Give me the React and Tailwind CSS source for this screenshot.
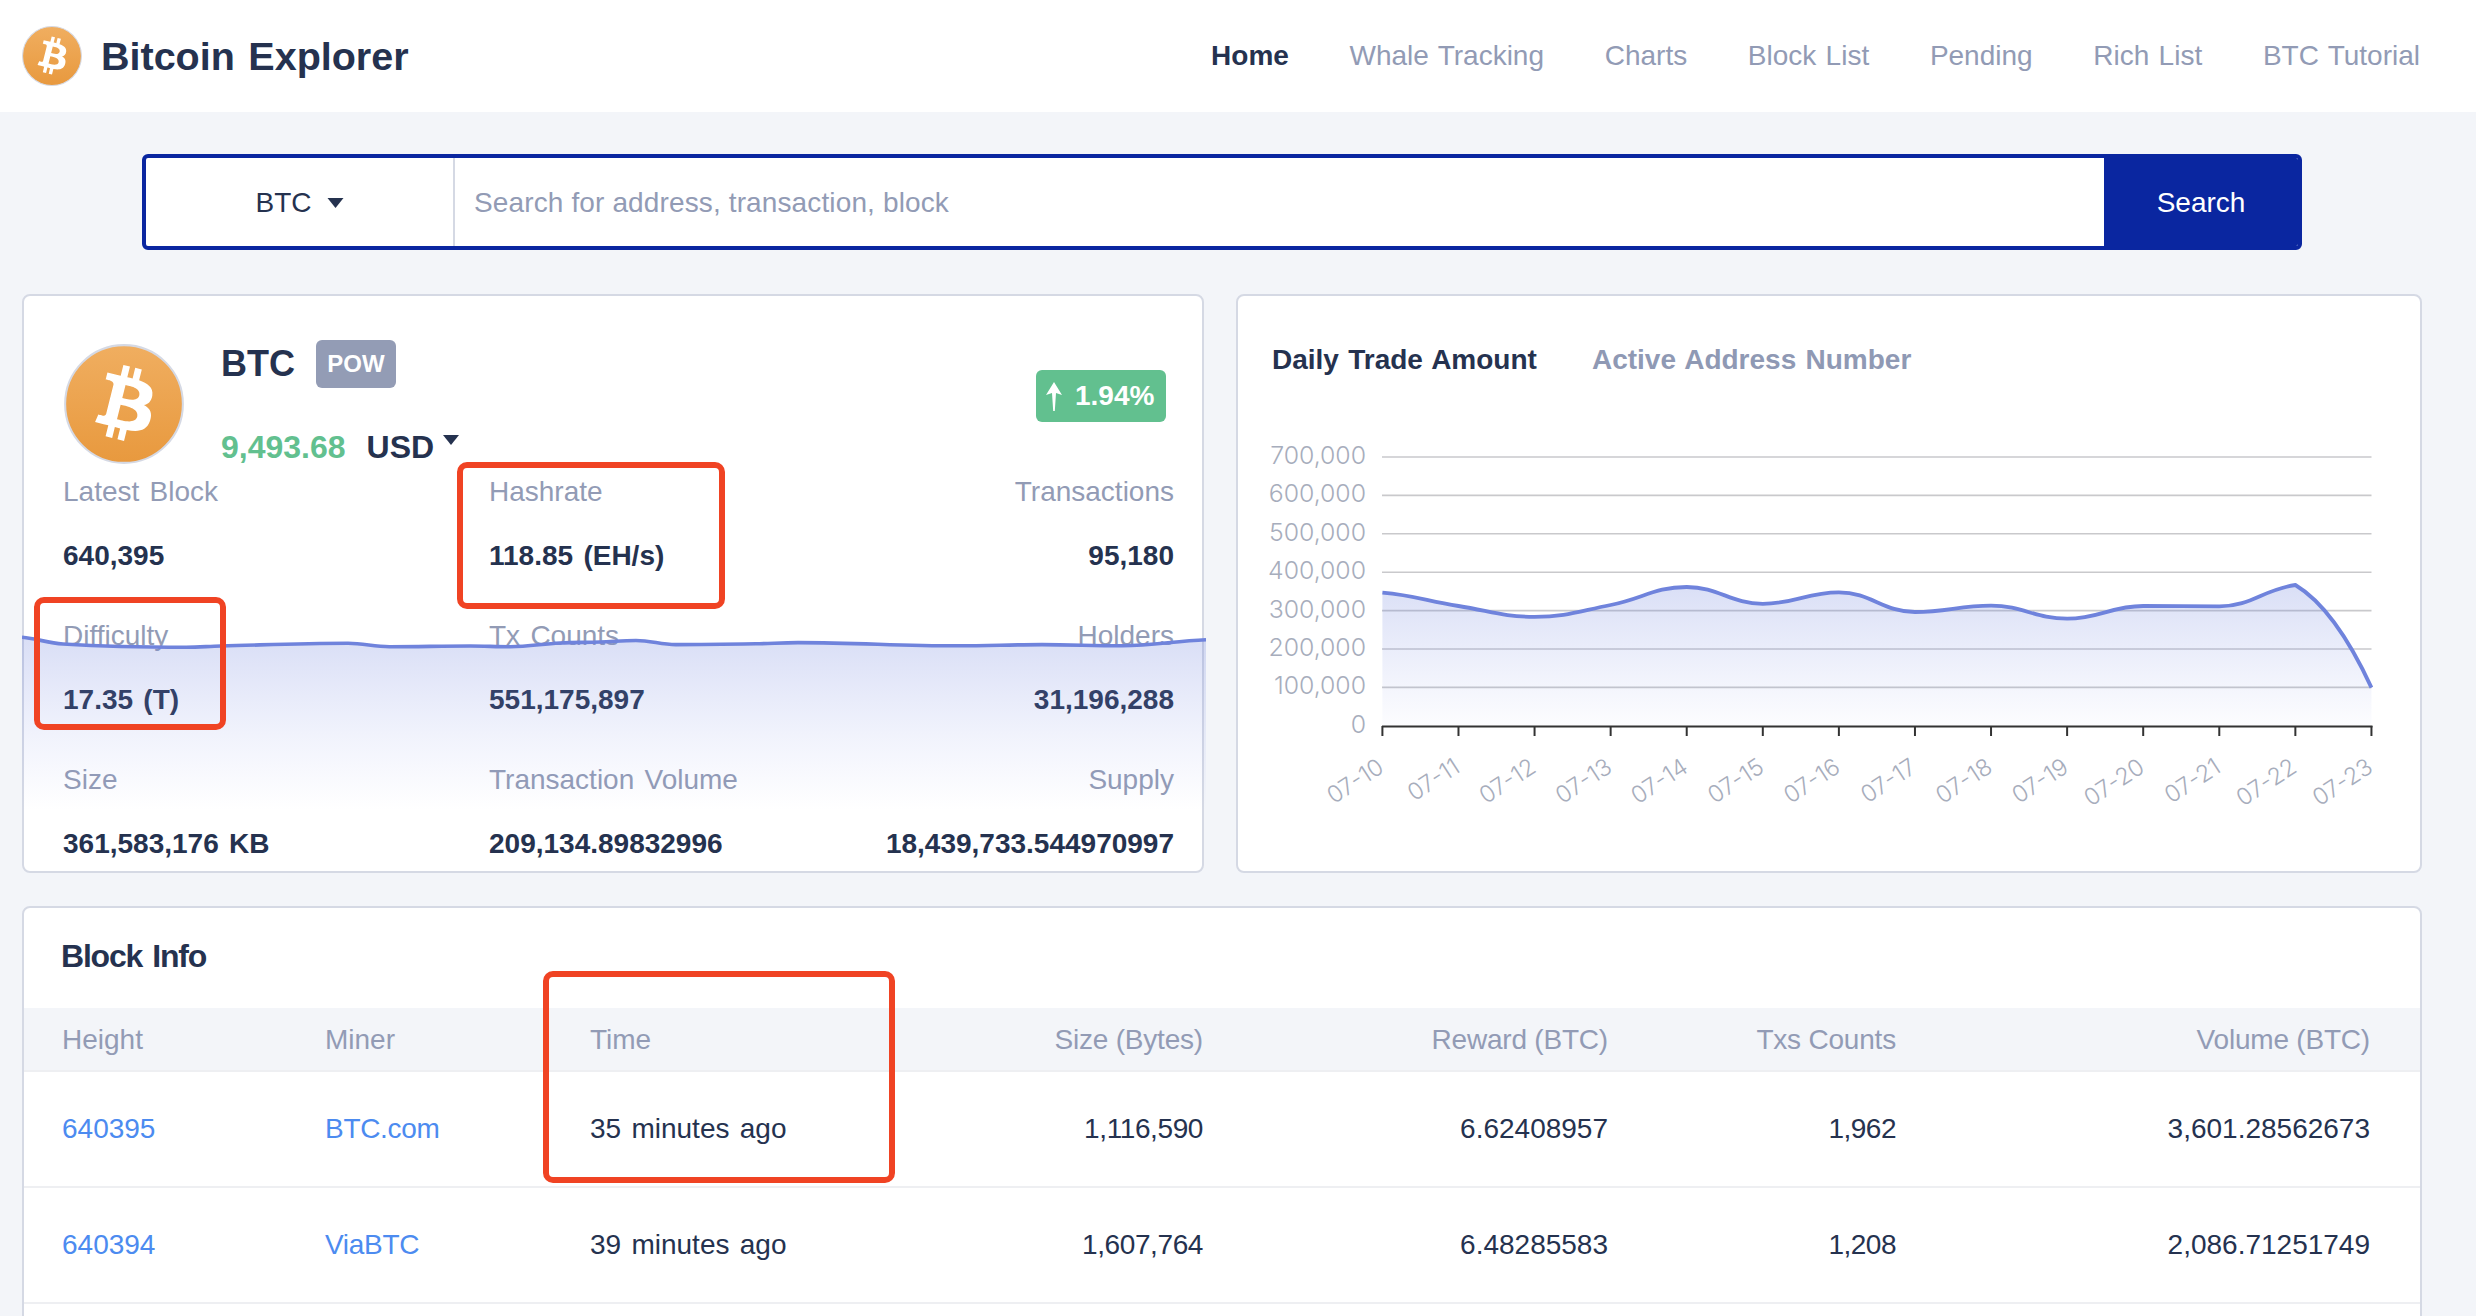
import React from 'react';

const BTC_PATH = "M46.1 27.441c.638-4.258-2.606-6.547-7.039-8.074l1.438-5.768-3.512-.875-1.4 5.616c-.922-.23-1.87-.447-2.812-.662l1.41-5.653-3.509-.875-1.439 5.766c-.764-.174-1.514-.346-2.242-.527l.004-.018-4.842-1.209-.934 3.75s2.605.597 2.55.634c1.422.355 1.68 1.296 1.636 2.042l-1.638 6.571c.098.025.225.061.365.117l-.37-.092-2.297 9.205c-.174.432-.615 1.08-1.609.834.035.051-2.552-.637-2.552-.637l-1.743 4.02 4.57 1.139c.85.213 1.683.436 2.502.646l-1.453 5.835 3.507.875 1.44-5.772c.957.26 1.887.5 2.797.726L27.504 50.8l3.511.875 1.453-5.823c5.987 1.133 10.49.676 12.383-4.738 1.527-4.36-.075-6.875-3.225-8.516 2.294-.531 4.022-2.04 4.483-5.157zM38.08 38.69c-1.086 4.36-8.426 2.004-10.807 1.412l1.928-7.729c2.38.594 10.011 1.77 8.88 6.317zm1.085-11.312c-.99 3.966-7.1 1.951-9.083 1.457l1.748-7.01c1.983.494 8.367 1.416 7.335 5.553z";

function Coin({ id, className }) {
  return (
    <svg viewBox="0 0 64 64" className={className}>
      <defs>
        <linearGradient id={id} x1="0" y1="0" x2="0" y2="1">
          <stop offset="0" stopColor="#f0ae60" />
          <stop offset="1" stopColor="#e8993e" />
        </linearGradient>
      </defs>
      <circle cx="32" cy="32" r="31.4" fill={`url(#${id})`} stroke="#d5d9e4" strokeWidth="1.1" />
      <path d={BTC_PATH} fill="#fff" transform="translate(1 0)" />
    </svg>
  );
}

function Caret({ className }) {
  return (
    <svg viewBox="0 0 16 10" className={className}>
      <path d="M0 0H16L8 10Z" fill="#25324f" />
    </svg>
  );
}

function smooth(pts, k = 0.42) {
  const n = pts.length;
  const slope = pts.map((p, i) => {
    if (i === 0 || i === n - 1) {
      const q = i === 0 ? pts[1] : pts[n - 2];
      return (q[1] - p[1]) / (q[0] - p[0]) / 2;
    }
    const a = pts[i - 1];
    const b = pts[i + 1];
    if ((p[1] - a[1]) * (b[1] - p[1]) <= 0) return 0;
    return (b[1] - a[1]) / (b[0] - a[0]);
  });
  let d = `M${pts[0][0]} ${pts[0][1]}`;
  for (let i = 0; i < n - 1; i++) {
    const dx = pts[i + 1][0] - pts[i][0];
    const c1x = pts[i][0] + k * dx;
    const c1y = pts[i][1] + slope[i] * k * dx;
    const c2x = pts[i + 1][0] - k * dx;
    const c2y = pts[i + 1][1] - slope[i + 1] * k * dx;
    d += ` C${c1x} ${c1y} ${c2x} ${c2y} ${pts[i + 1][0]} ${pts[i + 1][1]}`;
  }
  return d;
}

const wavePts = [
  [22, 637.3], [63, 644], [186, 647.3], [221, 646], [348, 643.3], [389.5, 646.7], [470.5, 646], [510, 646.7],
  [560, 643], [600, 642], [636, 640.5], [675.8, 644.6], [755.7, 643.8], [798, 642.6], [957.7, 645.8],
  [1042, 644.6], [1122, 645.8], [1206, 639.8],
];

function Wave() {
  const line = smooth(wavePts, 0.38);
  return (
    <svg viewBox="22 620 1184 253" className="absolute left-[-2px] top-[324px] w-[1184px] h-[253px] pointer-events-none">
      <defs>
        <linearGradient id="waveFill" gradientUnits="userSpaceOnUse" x1="0" y1="640" x2="0" y2="810">
          <stop offset="0" stopColor="#6f83dc" stopOpacity="0.26" />
          <stop offset="0.6" stopColor="#7f90e6" stopOpacity="0.1" />
          <stop offset="1" stopColor="#8090ea" stopOpacity="0" />
        </linearGradient>
      </defs>
      <path d={`${line} L1206 873 L22 873 Z`} fill="url(#waveFill)" />
      <path d={line} fill="none" stroke="#6f83dc" strokeWidth="3.6" />
    </svg>
  );
}

const tickX = (i) => 1382.4 + 76.08 * i;
const ys = [592.7, 606, 616.8, 605, 587, 603.8, 592.3, 612, 605.7, 618.7, 606, 606.4, 585];
const yLabels = ['700,000', '600,000', '500,000', '400,000', '300,000', '200,000', '100,000'];
const dates = ['07-10', '07-11', '07-12', '07-13', '07-14', '07-15', '07-16', '07-17', '07-18', '07-19', '07-20', '07-21', '07-22', '07-23'];

function Chart() {
  const head = smooth(ys.map((y, i) => [tickX(i), y]), 0.42);
  const x12 = tickX(12);
  const x13 = tickX(13);
  const line = `${head} C${x12 + 30} ${585 + 18} ${x13 - 22} ${640} ${x13} 687.6`;
  return (
    <svg viewBox="1238 430 1182 441" className="block w-[1182px] h-[441px] font-['Inter',sans-serif] font-light">
      <defs>
        <linearGradient id="chartFill" gradientUnits="userSpaceOnUse" x1="0" y1="585" x2="0" y2="726">
          <stop offset="0" stopColor="#6f83dc" stopOpacity="0.26" />
          <stop offset="1" stopColor="#7f90e6" stopOpacity="0.02" />
        </linearGradient>
      </defs>
      {yLabels.map((t, i) => {
        const y = 457 + i * 38.4;
        return (
          <g key={t}>
            <line x1="1382" x2="2371.5" y1={y} y2={y} stroke="#c9c9cc" strokeWidth="1.6" />
            <text x="1366" y={y + 7} textAnchor="end" fontSize="24.8" fill="#a7adbc">{t}</text>
          </g>
        );
      })}
      <text x="1366" y="733" textAnchor="end" fontSize="24.8" fill="#a7adbc">0</text>
      <path d={`${line} L${x13} 726 L${tickX(0)} 726 Z`} fill="url(#chartFill)" />
      <path d={line} fill="none" stroke="#6f83dc" strokeWidth="3.8" />
      <line x1="1382" x2="2372.5" y1="726.5" y2="726.5" stroke="#333" strokeWidth="2" />
      {dates.map((d, i) => (
        <g key={d}>
          <line x1={tickX(i)} x2={tickX(i)} y1="726" y2="736" stroke="#333" strokeWidth="2" />
          <text transform={`translate(${tickX(i) + 3} 771) rotate(-33)`} textAnchor="end" fontSize="23.5" fill="#a7adbc">{d}</text>
        </g>
      ))}
    </svg>
  );
}

const stats = [
  ['Latest Block', '640,395'], ['Hashrate', '118.85 (EH/s)'], ['Transactions', '95,180'],
  ['Difficulty', '17.35 (T)'], ['Tx Counts', '551,175,897'], ['Holders', '31,196,288'],
  ['Size', '361,583,176 KB'], ['Transaction Volume', '209,134.89832996'], ['Supply', '18,439,733.544970997'],
];

const nav = ['Whale Tracking', 'Charts', 'Block List', 'Pending', 'Rich List', 'BTC Tutorial'];

const rowCols = 'grid grid-cols-[263px_265px_300px_313px_405px_288px_474px] pl-[38px] items-center';

const rows = [
  ['640395', 'BTC.com', '35 minutes ago', '1,116,590', '6.62408957', '1,962', '3,601.28562673'],
  ['640394', 'ViaBTC', '39 minutes ago', '1,607,764', '6.48285583', '1,208', '2,086.71251749'],
];

const cellExtra = [
  'text-[#4c8bf0]',
  'text-[#4c8bf0] tracking-[-0.3px]',
  '',
  'text-right tracking-[-0.4px]',
  'text-right',
  'text-right tracking-[-0.5px]',
  'text-right',
];

function RedBox({ className }) {
  return <div className={`absolute border-[6px] border-[#f04323] rounded-[10px] pointer-events-none ${className}`} />;
}

export default function App() {
  return (
    <div className="h-[1316px] overflow-hidden bg-[#f3f5f9] text-[#25324f] text-[28px] leading-[40px] [word-spacing:2.5px] font-['Liberation_Sans',Arial,sans-serif]">
      <header className="h-[112px] bg-white flex items-center pl-[22px] pr-[56px]">
        <Coin id="coinSmall" className="w-[60px] h-[60px]" />
        <div className="ml-[19px] text-[39.5px] font-bold">Bitcoin Explorer</div>
        <nav className="ml-auto flex items-center gap-[60.7px] [word-spacing:1.5px]">
          <a className="font-bold">Home</a>
          {nav.map((n) => (
            <a key={n} className="text-[#929bb5]">{n}</a>
          ))}
        </nav>
      </header>

      <div className="mt-[42px] ml-[142px] w-[2160px] h-[96px] flex border-4 border-[#0a26a0] rounded-[6px] overflow-hidden bg-white">
        <div className="w-[307px] flex items-center justify-center gap-[15px] pt-[2px] border-r-2 border-[#d5d9e4] box-content">
          <span>BTC</span>
          <Caret className="w-[17px] h-[10px]" />
        </div>
        <input
          placeholder="Search for address, transaction, block"
          className="flex-1 pl-[19px] pt-[2px] outline-none text-[28px] tracking-[0.13px] placeholder:text-[#929bb5] bg-white"
        />
        <button className="w-[194px] pt-[2px] bg-[#0a26a0] text-white text-[28px]">Search</button>
      </div>

      <div className="mt-[44px] ml-[22px] flex gap-[32px]">
        <section className="relative w-[1182px] h-[579px] bg-white border-2 border-[#d5d9e4] rounded-[8px]">
          <div className="h-[176px] flex items-start pl-[40px] pr-[36px]">
            <Coin id="coinBig" className="w-[120px] h-[120px] mt-[48px]" />
            <div className="ml-[37px] pt-[44px]">
              <div className="flex items-center h-[48px]">
                <span className="text-[36px] font-bold">BTC</span>
                <span className="ml-[21px] w-[80px] h-[48px] rounded-[6px] bg-[#939cb5] text-white text-[24px] font-bold flex items-center justify-center">POW</span>
              </div>
              <div className="mt-[39px] flex items-center h-[40px] text-[32px] font-bold">
                <span className="text-[#62c08f]">9,493.68</span>
                <span className="ml-[21px]">USD</span>
                <Caret className="ml-[9px] w-[16px] h-[10px] -translate-y-[7px]" />
              </div>
            </div>
            <div className="ml-auto mt-[74px] w-[130px] h-[52px] rounded-[6px] bg-[#62c08f] text-white font-bold flex items-center pl-[10px]">
              <svg viewBox="0 0 16 29" className="w-[16px] h-[29px]">
                <path d="M8 0L16 13L10 11L8.8 29H7.2L6 11L0 13Z" fill="#fff" />
              </svg>
              <span className="ml-[13px]">1.94%</span>
            </div>
          </div>
          <div className="grid grid-cols-[426px_1fr_1fr] pl-[39px] pr-[28px]">
            {stats.map(([label, value], i) => (
              <div key={label} className={`h-[144px] ${i % 3 === 2 ? 'text-right' : ''}`}>
                <div className="text-[#929bb5] whitespace-nowrap">{label}</div>
                <div className="mt-[24px] font-bold whitespace-nowrap">{value}</div>
              </div>
            ))}
          </div>
          <Wave />
          <RedBox className="left-[433px] top-[166px] w-[268px] h-[147px]" />
          <RedBox className="left-[10px] top-[301px] w-[192px] h-[133px]" />
        </section>

        <section className="w-[1186px] h-[579px] bg-white border-2 border-[#d5d9e4] rounded-[8px]">
          <div className="pt-[44px] pl-[34px] flex gap-[55px] font-bold [word-spacing:1.5px]">
            <span>Daily Trade Amount</span>
            <span className="text-[#8f99b4]">Active Address Number</span>
          </div>
          <div className="mt-[50px]">
            <Chart />
          </div>
        </section>
      </div>

      <section className="relative mt-[33px] ml-[22px] w-[2400px] h-[600px] bg-white border-2 border-[#d5d9e4] rounded-[8px]">
        <div className="h-[100px] pl-[37px] pt-[28px] text-[32px] font-bold tracking-[-1.2px]">Block Info</div>
        <div className={`${rowCols} h-[64px] pt-[2px] bg-[#f3f5f9] border-b-2 border-[#eeeff2] text-[#929bb5] [word-spacing:0px]`}>
          {['Height', 'Miner', 'Time', 'Size (Bytes)', 'Reward (BTC)', 'Txs Counts', 'Volume (BTC)'].map((h, i) => (
            <div key={h} className={i > 2 ? 'text-right tracking-[-0.2px]' : ''}>{h}</div>
          ))}
        </div>
        {rows.map((r) => (
          <div key={r[0]} className={`${rowCols} h-[116px] border-b-2 border-[#eeeff2]`}>
            {r.map((c, i) => (
              <div key={i} className={cellExtra[i]}>{c}</div>
            ))}
          </div>
        ))}
        <RedBox className="left-[519px] top-[63px] w-[352px] h-[212px]" />
      </section>
    </div>
  );
}
